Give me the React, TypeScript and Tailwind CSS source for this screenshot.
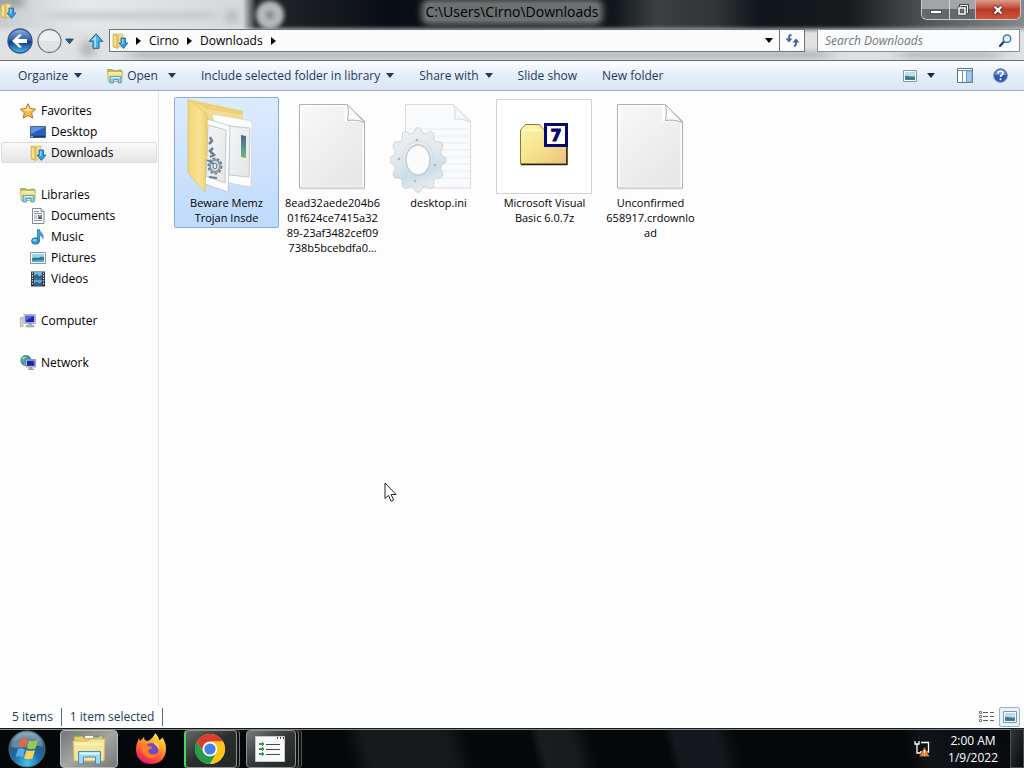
import React from "react";

type IconProps = { className?: string };

const ChevronDown = ({ className = "" }: IconProps) => (
  <svg className={`shrink-0 ${className}`} width="8" height="5" viewBox="0 0 8 5" aria-hidden="true">
    <path d="M0 0h8L4 5z" fill="currentColor" />
  </svg>
);

const ChevronRight = ({ className = "" }: IconProps) => (
  <svg className={`shrink-0 ${className}`} width="5" height="8" viewBox="0 0 5 8" aria-hidden="true">
    <path d="M0 0v8l5-4z" fill="#000" />
  </svg>
);

const DownloadsIcon = ({ className = "" }: IconProps) => (
  <svg className={`shrink-0 ${className}`} width="16" height="16" viewBox="0 0 16 16" aria-hidden="true">
    <path d="M2 1h9v13H2z" fill="#f0dc94" stroke="#cdb468" strokeWidth=".6" />
    <path d="M1 1l5 1.500v13L1 14z" fill="#e8c65c" stroke="#c1a24c" strokeWidth=".5" />
    <path d="M2 2.500l2 .6v10.500l-2-.8z" fill="#f3e09a" />
    <path d="M9 5h4.500v5H16l-4.500 5.500L7 10h2z" fill="#2f9ae0" stroke="#1668a8" strokeWidth=".8" />
    <path d="M10 6h1.500v5H9l1-.6z" fill="#8bd3f8" />
  </svg>
);

const LibrariesIcon = ({ className = "" }: IconProps) => (
  <svg className={`shrink-0 ${className}`} width="16" height="16" viewBox="0 0 16 16" aria-hidden="true">
    <path d="M.5 3.500V1.500h5l1 1h4l.5-.5h3.500v2" fill="#9dc95a" stroke="#8aa04a" strokeWidth=".7" />
    <path d="M.5 3.500h15l-.7 10H1.200z" fill="#f3e087" stroke="#c9ab4e" strokeWidth=".8" />
    <path d="M2 5h12" stroke="#fff8c8" />
    <path d="M3 15V8.500h11V15h-3v-3.500H6.500V15z" fill="#8ed3ee" stroke="#3d91bd" strokeWidth=".8" />
    <path d="M4 9.500h9" stroke="#d8f4ff" />
  </svg>
);

const StarIcon = () => (
  <svg className="shrink-0" width="16" height="16" viewBox="0 0 16 16" aria-hidden="true">
    <path d="M8 .7l2.300 4.800 5.200.6-3.800 3.700 1 5.300L8 12.500l-4.700 2.600 1-5.300L.5 6.100l5.200-.6z" fill="#fbb93c" stroke="#a9743a" strokeWidth="1" strokeLinejoin="round" />
    <path d="M8 2.500l1.600 3.600 4 .5L8 8.500 2.500 6.600l4-.5z" fill="#ffe59a" />
  </svg>
);

const DesktopIcon = () => (
  <svg className="shrink-0" width="16" height="16" viewBox="0 0 16 16" aria-hidden="true">
    <path d="M.5 2.500h15v11H.5z" fill="#2a5fbf" stroke="#4a6690" />
    <path d="M1 3h14L1 10z" fill="#5c93e6" />
    <path d="M1 12.500h14" stroke="#173a7a" strokeWidth="1.500" />
    <path d="M1 12.500h2" stroke="#8fd0f5" strokeWidth="1" />
  </svg>
);

const DocumentIcon = () => (
  <svg className="shrink-0" width="16" height="16" viewBox="0 0 16 16" aria-hidden="true">
    <path d="M2.500.5h8.500l3 3v12H2.500z" fill="#fff" stroke="#7f8790" />
    <path d="M11 .5v3h3" fill="#dde3e8" stroke="#7f8790" />
    <path d="M4 3.500h5M4 5.500h8M4 8h3M4 10h3M4 12.500h8" stroke="#8796a5" />
    <path d="M8 7h4v4H8z" fill="#4f6270" />
    <path d="M8.500 8.500l1.500-1 1.500 1" stroke="#c8d5dd" fill="none" />
  </svg>
);

const MusicIcon = () => (
  <svg className="shrink-0" width="16" height="16" viewBox="0 0 16 16" aria-hidden="true">
    <ellipse cx="5.500" cy="12" rx="4" ry="3.300" fill="#2f96d2" stroke="#1b6fa5" strokeWidth=".7" />
    <path d="M7.500.5h2c.2 3 4.500 3.800 3.500 9-.6-2-1.500-3-3.500-3.300V12h-2z" fill="#3aa2dc" stroke="#1b6fa5" strokeWidth=".7" />
    <ellipse cx="4.800" cy="11.200" rx="2" ry="1.300" fill="#8ed4f4" />
  </svg>
);

const PicturesIcon = () => (
  <svg className="shrink-0" width="16" height="16" viewBox="0 0 16 16" aria-hidden="true">
    <path d="M.5 2.500h15v11H.5z" fill="#fff" stroke="#7d98b3" />
    <path d="M2 4h12v8H2z" fill="#9bd5f0" />
    <path d="M2 8.500c3-2 5 0 7-1s3-1 5-.5V12H2z" fill="#2c7d86" />
    <path d="M2 10.500c4-1.500 8 .5 12-1V12H2z" fill="#5aa6c8" />
  </svg>
);

const VideosIcon = () => (
  <svg className="shrink-0" width="16" height="16" viewBox="0 0 16 16" aria-hidden="true">
    <path d="M1 .5h14v15H1z" fill="#2d3336" />
    <path d="M4 1h8v6.500H4z" fill="#6fb6dd" />
    <path d="M4 8.500h8V15H4z" fill="#5fa5d2" />
    <path d="M4 5l3-2 2 2.500 3-1.500v3.500H4zM4 12.500l3-2 2 2 3-1.500v4H4z" fill="#2c6292" />
    <path d="M2.500 1.500v13M13.500 1.500v13" stroke="#e8ecee" strokeWidth="1.200" strokeDasharray="1.300 1.300" />
  </svg>
);

const ComputerIcon = () => (
  <svg className="shrink-0" width="16" height="16" viewBox="0 0 16 16" aria-hidden="true">
    <path d="M.5 4.500h2.500v9H.5z" fill="#dcdfd6" stroke="#a0a49d" strokeWidth=".8" />
    <path d="M4 1.500h11.500v9H4z" fill="#d5dbe3" stroke="#9aa4ae" strokeWidth=".8" />
    <path d="M5.500 2.800h8.700v6.500H5.500z" fill="#1d27b4" />
    <path d="M5.500 2.800h8.700L9 6 5.500 8z" fill="#5665df" />
    <path d="M8.500 10.500h3v2h2.500v1.500H6v-1.500h2.500z" fill="#b3b8ba" stroke="#858a8d" strokeWidth=".5" />
  </svg>
);

const NetworkIcon = () => (
  <svg className="shrink-0" width="16" height="16" viewBox="0 0 16 16" aria-hidden="true">
    <circle cx="6" cy="5.500" r="5.200" fill="#3d92cc" stroke="#2c678f" strokeWidth=".6" />
    <path d="M2 3c2-2.500 5-2 5.500-1.500C7 3 5 3 4.500 5S3 7 1 6zM4 8c2 0 3 1 2.500 2.500-1 .5-2.500 0-3.500-1z" fill="#66b569" />
    <path d="M2 3l3-1-1 2z" fill="#d5f2d4" />
    <path d="M6 4.500h9.500v7.500H6z" fill="#d8dde5" stroke="#7d8793" strokeWidth=".8" />
    <path d="M7 5.600h7.500v5.300H7z" fill="#1b24ad" />
    <path d="M12 5.600h2.500v3z" fill="#5e6bea" />
    <path d="M9.500 12h2.500v1.500h2V15H8v-1.500h1.500z" fill="#9ba2a8" />
  </svg>
);

const FolderArt = () => (
  <svg width="96" height="96" viewBox="0 0 96 96" aria-hidden="true">
    <defs>
      <linearGradient id="flap" x1="0" y1="0" x2="1" y2="0">
        <stop offset="0" stopColor="#f1d576" />
        <stop offset=".6" stopColor="#f9e494" />
        <stop offset="1" stopColor="#ecd06f" />
      </linearGradient>
      <linearGradient id="sheet" x1="0" y1="0" x2="1" y2="1">
        <stop offset="0" stopColor="#f4f5f6" />
        <stop offset="1" stopColor="#e3e5e7" />
      </linearGradient>
      <linearGradient id="strip" x1="0" y1="0" x2="0" y2="1">
        <stop offset="0" stopColor="#45698a" />
        <stop offset="1" stopColor="#74b680" />
      </linearGradient>
    </defs>
    <g transform="translate(1 0)">
      <path d="M9 0l55 12v28H28z" fill="#f3dd8b" />
      <path d="M11 1l53 11v4L28 10z" fill="#ecd176" />
      <path d="M33 15l40 7-1 66-22-4z" fill="#fdfdfe" stroke="#c5ccd3" strokeWidth=".6" />
      <path d="M50 27l21 2-1 49-20-2z" fill="url(#sheet)" stroke="#c5cacd" />
      <path d="M62 36l5 1v22l-5-1z" fill="url(#strip)" />
      <path d="M28 20l23 7-2 66-23-8z" fill="#fdfdfe" stroke="#b4bac0" strokeWidth=".7" />
      <path d="M29 26l18 5-1 53-19-7z" fill="url(#sheet)" stroke="#c4c9cc" />
      <g fill="none" stroke="#6d8092">
        <ellipse cx="36" cy="67" rx="6" ry="7" strokeWidth="3" strokeDasharray="2.500 1.500" />
        <ellipse cx="36" cy="67" rx="5" ry="6" strokeWidth="2" stroke="#8798a8" />
        <ellipse cx="36" cy="67" rx="2" ry="3" strokeWidth="1" stroke="#55687c" />
        <path d="M31 38l2 4-3 3M34 49l-3 3 4 4-4 2" strokeWidth="2.500" />
        <path d="M28 61l7 4M30 78l8 1" strokeWidth="2" />
      </g>
      <path d="M9 0l19 15v43c-2 2-1 4-1 6l-1 29L9 74z" fill="url(#flap)" stroke="#dec065" strokeWidth=".7" />
    </g>
  </svg>
);

const PageArt = () => (
  <svg width="96" height="96" viewBox="0 0 96 96" aria-hidden="true">
    <defs>
      <linearGradient id="page" x1="0" y1="0" x2=".7" y2="1">
        <stop offset="0" stopColor="#f8f8f8" />
        <stop offset="1" stopColor="#e7e7e7" />
      </linearGradient>
    </defs>
    <path d="M15.500 5.500h47L80.500 22v67h-65z" fill="#fff" stroke="#adadad" />
    <path d="M17.500 7.500h43v15h18v65h-61z" fill="url(#page)" />
    <path d="M63.500 5.500c1 5 1 10 0 16 6-1 12 0 17 2z" fill="#fafafa" stroke="#adadad" />
    <path d="M16 90h65" stroke="#d8d8d8" />
  </svg>
);

const gearPoints = Array.from({ length: 48 }, (_, i) => {
  const phase = i % 4;
  const r = phase === 0 || phase === 3 ? 1 : 1.17;
  const a = ((i - 1.5) / 48) * Math.PI * 2;
  return `${(28 + Math.cos(a) * 24 * r).toFixed(1)},${(61 + Math.sin(a) * 27.500 * r).toFixed(1)}`;
}).join(" ");

const IniArt = () => (
  <svg width="96" height="96" viewBox="0 0 96 96" aria-hidden="true">
    <defs>
      <linearGradient id="gear" x1="0" y1="0" x2=".3" y2="1">
        <stop offset="0" stopColor="#f0f1f2" />
        <stop offset=".5" stopColor="#e2e9ee" />
        <stop offset=".8" stopColor="#cadeea" />
        <stop offset="1" stopColor="#e4eaee" />
      </linearGradient>
      <mask id="gear-hole">
        <rect width="96" height="96" fill="#fff" />
        <ellipse cx="28" cy="61" rx="12" ry="15" fill="#000" />
      </mask>
    </defs>
    <path d="M15.500 5.500h48L80.500 22v67h-65z" fill="#f9fafb" stroke="#dadcdf" />
    <path d="M17 30h62M17 37h62M17 44h62M17 51h62M17 58h62M17 65h62M17 72h62M17 79h62" stroke="#e8edf2" />
    <path d="M63.500 5.500c2 5 2 10 1 15 6-1 11 0 16 3z" fill="#f5f6f7" stroke="#dadcdf" />
    <ellipse cx="28" cy="61" rx="13" ry="16" fill="#fafbfc" />
    <g mask="url(#gear-hole)">
      <polygon points={gearPoints} fill="url(#gear)" stroke="#cbd4da" strokeLinejoin="round" />
    </g>
    <ellipse cx="28" cy="61" rx="16" ry="19" fill="none" stroke="#d5dde3" />
    <ellipse cx="28" cy="61" rx="12" ry="15" fill="none" stroke="#bfcad4" strokeWidth="1.500" />
    <g fill="#a9b8c6">
      <circle cx="27" cy="41" r="1.300" /><circle cx="9" cy="60" r="1.300" />
      <circle cx="45" cy="66" r="1.300" /><circle cx="25" cy="82" r="1.300" />
    </g>
  </svg>
);

const ArchiveArt = () => (
  <svg width="96" height="96" viewBox="0 0 96 96" aria-hidden="true">
    <defs>
      <linearGradient id="zip" x1="0" y1="0" x2="1" y2="1">
        <stop offset="0" stopColor="#fff6ae" />
        <stop offset=".6" stopColor="#f3de88" />
        <stop offset="1" stopColor="#eabf80" />
      </linearGradient>
    </defs>
    <path d="M.5.5h95v94H.5z" fill="#fff" stroke="#d2d2d2" />
    <path d="M24.500 65V31l5-5.500h14l4 5h23V65z" fill="url(#zip)" stroke="#8d7a2e" />
    <path d="M26 31h20" stroke="#fff8bd" strokeWidth="2" />
    <path d="M25 65.500h46V47" stroke="#29230b" fill="none" strokeWidth="1.500" />
    <path d="M49.500 25.500h21v21h-21z" fill="#fff" stroke="#080870" strokeWidth="3" />
    <text x="60" y="42" textAnchor="middle" fill="#080870" stroke="#080870" strokeWidth="1" className="font-['DejaVu_Sans',sans-serif] text-[16px] font-bold">7</text>
  </svg>
);

const ViewThumbIcon = () => (
  <svg width="14" height="12" viewBox="0 0 14 12" aria-hidden="true">
    <path d="M.5.500h13v11H.5z" fill="#fff" stroke="#7e98b0" />
    <path d="M2 2h10v8H2z" fill="#bcdcea" />
    <path d="M2 6c3-1 4 1 10 .5V10H2z" fill="#3d7c8c" />
  </svg>
);

const StartOrb = () => (
  <svg width="38" height="38" viewBox="0 0 38 38" aria-hidden="true">
    <defs>
      <radialGradient id="orb" cx=".5" cy=".9" r=".9">
        <stop offset="0" stopColor="#41c9f3" />
        <stop offset=".4" stopColor="#1c6fa9" />
        <stop offset=".75" stopColor="#2c5373" />
        <stop offset="1" stopColor="#8ea9b9" />
      </radialGradient>
    </defs>
    <circle cx="19" cy="19" r="18" fill="url(#orb)" stroke="#4d7186" />
    <path d="M3 17C4 8 11 3 19 3s15 5 16 14c-9-4-22 3-32 0z" fill="#bed3df" opacity=".4" />
    <path d="M13.500 9c2.500-1 4-.5 6 .7l-2 8c-2-1.300-4.500-1.500-7-.5z" fill="#ed6533" />
    <path d="M21 10.500c2.500 1.300 5 1 9-.5l-2.500 8.500c-2.500 1-6 1-8.500-.3z" fill="#9bc94b" />
    <path d="M10 18.700c2.500-1 5-.5 7 .7l-2.300 8c-2-1.300-4.500-1.500-7-.5z" fill="#5caae9" />
    <path d="M18.500 20c2.500 1.300 5.500 1 8.500 0l-2.500 8.500c-2.500 1-6 1-8.500-.3z" fill="#fad24e" />
  </svg>
);

const ExplorerIcon = () => (
  <svg width="34" height="32" viewBox="0 0 34 32" aria-hidden="true">
    <path d="M2 8V3h9l1 2h10V3h9v6" fill="#e6cc73" stroke="#ad903f" />
    <path d="M3 2.500h5" stroke="#55ad54" strokeWidth="2" />
    <path d="M13 4h8" stroke="#f9f9f0" strokeWidth="2" />
    <path d="M23 3.500h4" stroke="#4099d1" strokeWidth="2" />
    <path d="M1 8h15l2-2h15l-1 22H2z" fill="#f6e59c" stroke="#d4b75e" />
    <path d="M3 11h28" stroke="#fffbd7" />
    <path d="M6.500 31V18.500h22V31h-5v-7h-12v7z" fill="#9bd8f5" stroke="#438fc0" />
    <path d="M8 20.500h19" stroke="#e1f7ff" strokeWidth="2" />
  </svg>
);

const FirefoxIcon = () => (
  <svg width="32" height="32" viewBox="0 0 32 32" aria-hidden="true">
    <defs>
      <linearGradient id="fox" x1=".8" y1="0" x2=".3" y2="1">
        <stop offset="0" stopColor="#fff044" />
        <stop offset=".35" stopColor="#ffa52b" />
        <stop offset=".7" stopColor="#ff5136" />
        <stop offset="1" stopColor="#e3166c" />
      </linearGradient>
    </defs>
    <path d="M20 0c3 3 4 5 4 7 3-1 3-2 3-3 3 4 4 8 4 12 0 9-6 15-15 15S1 25 1 16C1 11 3 8 4 5l1 3 4-4c0 3 2 4 4 4 3-2 6-4 7-8z" fill="url(#fox)" />
    <path d="M10 13c4-4 10-4 13 1 2 5-2 10-7 9-4 0-7-3-7-7 3 2 5 1 7-1-2-1-4-1-6-2z" fill="#7449c5" />
    <path d="M4 14c3-4 7-3 9-1l4 1c0 2-3 2-4 4 1 4 7 5 11 1-2 7-11 8-15 3-2-3-2-6-5-8z" fill="#ff7c28" />
    <path d="M19 8c4 1 6 5 5 9-1-2-3-5-5-6z" fill="#ffd33c" />
  </svg>
);

const ChromeIcon = () => (
  <svg width="32" height="32" viewBox="0 0 32 32" aria-hidden="true">
    <circle cx="16" cy="16" r="15" fill="#fbc51a" />
    <path d="M3 8.500A15 15 0 0 1 29 8.500H16A7.500 7.500 0 0 0 9.500 19.800z" fill="#dc3c30" />
    <path d="M3 8.500l6.500 11.300A7.500 7.500 0 0 0 22.500 19.800L16 31A15 15 0 0 1 3 8.500z" fill="#229c51" />
    <path d="M16 31l6.500-11.200A7.500 7.500 0 0 0 22.500 12L29 8.500A15 15 0 0 1 16 31z" fill="#fbc51a" />
    <path d="M16 8.500h13l1 4h-9z" fill="#fbc51a" />
    <circle cx="16" cy="16" r="7.300" fill="#f6f8fa" />
    <circle cx="16" cy="16" r="5.600" fill="#3f83e8" />
  </svg>
);

const ListAppIcon = () => (
  <svg width="30" height="26" viewBox="0 0 30 26" aria-hidden="true">
    <path d="M.5.5h29v25H.5z" fill="#f9f9f9" stroke="#c7c7c7" />
    <path d="M22 2h1M25 2h1M28 2h1" stroke="#444" strokeWidth="2" />
    <g stroke="#379b45" strokeWidth="2" fill="none">
      <path d="M4 8h4M4 13h4M4 18h4" /><path d="M7 6l2 2-2 2M7 11l2 2-2 2M7 16l2 2-2 2" strokeWidth="1" />
    </g>
    <path d="M11 8.500h14M11 13.500h14M11 18.500h14" stroke="#424b48" />
  </svg>
);

const NavRow = ({ label, icon, child = false, selected = false }: { label: string; icon: React.ReactNode; child?: boolean; selected?: boolean }) => (
  <a
    href="#"
    className={`mx-px flex h-[21px] items-center gap-1 rounded-xs border ${child ? "pl-7" : "pl-[18px]"} ${
      selected ? "border-[#dcdcdc] bg-linear-to-b from-[#fafafa] to-[#e5e5e5]" : "border-transparent"
    }`}
  >
    {icon}
    <span className="pl-px">{label}</span>
  </a>
);

const FileItem = ({ lines, art, selected = false }: { lines: string[]; art: React.ReactNode; selected?: boolean }) => (
  <button
    type="button"
    className={`flex w-[105px] flex-col items-center rounded-xs border px-0 pt-px pb-px text-center text-[11px] leading-[15px] ${
      selected ? "border-[#84acdd] bg-linear-to-b from-[#dcebfd] to-[#bfdafb]" : "border-transparent"
    }`}
  >
    <span className="block pr-px">{art}</span>
    <span className="pb-px">
      {lines.map((line) => (
        <span key={line} className="block whitespace-nowrap">{line}</span>
      ))}
    </span>
  </button>
);

const commandClass = "flex h-full items-center gap-[6px] whitespace-nowrap";

export default function App() {
  return (
    <div className="relative flex min-h-screen flex-col overflow-hidden bg-[#fdfdfd] font-['Open_Sans','Noto_Sans',sans-serif] text-[12px] text-black">
      <header className="relative isolate">
        <svg className="absolute inset-0 -z-10 h-full w-full" viewBox="0 0 1024 60" preserveAspectRatio="none" aria-hidden="true">
          <defs>
            <filter id="soft" x="-50%" y="-50%" width="200%" height="200%"><feGaussianBlur stdDeviation="4" /></filter>
            <filter id="edge" x="-50%" y="-50%" width="200%" height="200%"><feGaussianBlur stdDeviation="2" /></filter>
            <filter id="softer"><feGaussianBlur stdDeviation="10 3" /></filter>
            <linearGradient id="glass" x1="0" y1="0" x2="1" y2="0">
              <stop offset="0" stopColor="#c9cccf" />
              <stop offset=".08" stopColor="#e7e8ea" />
              <stop offset=".237" stopColor="#d5d8da" />
              <stop offset=".25" stopColor="#24282c" />
              <stop offset=".38" stopColor="#090e14" />
              <stop offset=".6" stopColor="#11171b" />
              <stop offset=".64" stopColor="#3b3f40" />
              <stop offset=".7" stopColor="#303436" />
              <stop offset=".74" stopColor="#10161b" />
              <stop offset=".83" stopColor="#171b1e" />
              <stop offset=".91" stopColor="#55585a" />
              <stop offset="1" stopColor="#85888a" />
            </linearGradient>
          </defs>
          <rect width="1024" height="60" fill="url(#glass)" />
          <path d="M-20 29h1080v50H-20z" fill="#dfe1e3" filter="url(#edge)" />
          <g filter="url(#softer)">
            <path d="M130 52h700v6H130z" fill="#a9abad" />
            <path d="M900 53h100v4H900z" fill="#989a9c" />
            <path d="M50 13h165v5H50z" fill="#bcbfc2" />
          </g>
          <g filter="url(#soft)">
            <path d="M-10-5h34v12H-10z" fill="#999da0" />
            <circle cx="29" cy="14" r="5" fill="#d0d7cc" />
            <circle cx="232" cy="17" r="5" fill="#a4a7aa" />
            <circle cx="88" cy="49" r="8" fill="#b1b4b7" />
          </g>
          <circle cx="270" cy="15" r="14" fill="#d0d3d5" opacity=".85" filter="url(#edge)" />
          <circle cx="270" cy="15" r="4" fill="#858a8e" filter="url(#edge)" />
        </svg>

        <div className="grid h-[29px] grid-cols-[1fr_auto_1fr] items-start">
          <div className="pt-[3px]"><DownloadsIcon /></div>
          <h1 className="px-2 pt-[3px] text-[14px] leading-[18px] font-normal">
            <span className="block rounded-sm bg-[#6d7072] shadow-[0_0_6px_4px_#6d7072]">C:\Users\Cirno\Downloads</span>
          </h1>
          <div className="mr-[3px] flex h-5 justify-self-end overflow-hidden rounded-b-md border border-t-0 border-[#c8cbcd]">
            <button type="button" aria-label="Minimize" className="flex w-[27px] items-end justify-center bg-linear-to-b from-[#a2a4a5] from-45% to-[#64686a] to-50% pb-[5px]">
              <span className="h-1 w-3 border border-[#51595e] bg-white" />
            </button>
            <button type="button" aria-label="Restore" className="flex w-[26px] items-center justify-center border-l border-[#d1d4d5] bg-linear-to-b from-[#a2a4a5] from-45% to-[#64686a] to-50%">
              <svg width="12" height="12" viewBox="0 0 12 12" aria-hidden="true">
                <path d="M3.500 1.500h7v7h-7z" fill="none" stroke="#40484e" strokeWidth="3" /><path d="M3.500 1.500h7v7h-7z" fill="none" stroke="#fff" />
                <path d="M2 4h6v6H2z" fill="#747779" stroke="#40484e" strokeWidth="3" /><path d="M2 4h6v6H2z" fill="none" stroke="#fff" strokeWidth="1.500" />
              </svg>
            </button>
            <button type="button" aria-label="Close" className="flex w-[45px] items-center justify-center border-l border-[#d1b7b0] bg-linear-to-b from-[#db9b8d] via-[#b83b24] to-[#cf5439]">
              <svg width="12" height="10" viewBox="0 0 12 10" aria-hidden="true">
                <path d="M2 1l8 8M10 1L2 9" stroke="#642d2b" strokeWidth="4" />
                <path d="M2.500 1.500l7 7M9.500 1.500l-7 7" stroke="#fff" strokeWidth="2.300" />
              </svg>
            </button>
          </div>
        </div>

        <div className="flex h-[31px] items-start pr-1 pl-[7px]">
          <div className="flex h-6 items-center">
            <button type="button" aria-label="Back" className="flex">
              <svg width="26" height="26" viewBox="0 0 26 26" aria-hidden="true">
                <defs>
                  <linearGradient id="back" x1="0" y1="0" x2="0" y2="1">
                    <stop offset="0" stopColor="#8fb0dc" /><stop offset=".48" stopColor="#295cae" />
                    <stop offset=".5" stopColor="#102f7f" /><stop offset="1" stopColor="#42c2ef" />
                  </linearGradient>
                </defs>
                <circle cx="13" cy="13" r="12" fill="url(#back)" stroke="#30548a" strokeWidth="1.300" />
                <path d="M5 13l7-6.500h3L11 11h9v4h-9l4 4.500h-3z" fill="#fff" />
              </svg>
            </button>
            <button type="button" aria-label="Forward" className="ml-1 flex">
              <svg width="25" height="26" viewBox="0 0 25 26" aria-hidden="true">
                <circle cx="12.500" cy="13" r="11.500" fill="#dfe1e3" stroke="#767a7e" strokeWidth="1.300" />
                <path d="M2 13A10.500 10.500 0 0 1 23 13z" fill="#eeeff1" />
              </svg>
            </button>
            <button type="button" aria-label="Recent locations" className="ml-[3px] flex">
              <svg width="9" height="7" viewBox="0 0 10 7" aria-hidden="true"><path d="M.8.8h8.400L5 6z" fill="#286587" stroke="#1d4056" /></svg>
            </button>
            <button type="button" aria-label="Up one level" className="ml-[14px] flex">
              <svg width="16" height="16" viewBox="0 0 16 16" aria-hidden="true">
                <path d="M8 .8l6.800 7.500H11v7H5v-7H1.200z" fill="#4eb4ec" stroke="#1e6291" strokeLinejoin="round" />
                <path d="M8 2.500v12H6.300V7H4z" fill="#a6def9" />
              </svg>
            </button>
          </div>
          <nav aria-label="Address" className="ml-[5px] flex h-[23px] min-w-0 flex-1 items-center border border-[#707477] bg-[#fbfbfc] pl-[2px]">
            <DownloadsIcon />
            <ChevronRight className="ml-2" />
            <a href="#" className="ml-2">Cirno</a>
            <ChevronRight className="ml-2" />
            <a href="#" className="ml-2">Downloads</a>
            <ChevronRight className="ml-2" />
            <button type="button" aria-label="Previous locations" className="ml-auto flex px-1.5"><ChevronDown /></button>
            <button type="button" aria-label="Refresh" className="flex h-full w-[25px] items-center justify-center border-l border-[#707477]">
              <svg width="15" height="13" viewBox="0 0 15 13" aria-hidden="true">
                <path d="M6.500 1Q4 1 4 3.500V5M11 8v1.500q0 2.500-2 2.500" stroke="#3d61a9" strokeWidth="1.800" fill="none" />
                <path d="M.5 4.500h7L4 8.500zM7.500 8.500l3.500-4 3.500 4z" fill="#3d61a9" />
              </svg>
            </button>
          </nav>
          <div className="ml-3 flex h-[23px] w-[203px] items-center border border-[#8c9092] bg-[#fafbfc] px-[7px]">
            <input type="text" aria-label="Search Downloads" placeholder="Search Downloads" className="h-full min-w-0 flex-1 bg-transparent leading-[20px] outline-none placeholder:text-[#73777a] placeholder:italic" />
            <svg width="13" height="13" viewBox="0 0 13 13" aria-hidden="true">
              <path d="M1 12l4-4.500" stroke="#27417d" strokeWidth="2.300" strokeLinecap="round" />
              <circle cx="8" cy="4.700" r="3.700" fill="#ecf6ff" stroke="#497caf" strokeWidth="1.600" />
            </svg>
          </div>
        </div>
      </header>

      <div role="toolbar" aria-label="Folder commands" className="flex h-[31px] shrink-0 items-center gap-[25px] border-t border-b border-t-[#696f77] border-b-[#a0a9c1] bg-linear-to-b from-[#f8fbff] from-10% via-[#e4eefa] via-50% to-[#dce6f5] pr-4 pl-[18px] text-[#1e395b]">
        <button type="button" className={commandClass}>Organize<ChevronDown className="text-[#243a50]" /></button>
        <button type="button" className={commandClass}>
          <span className="flex items-center gap-1"><LibrariesIcon />Open</span>
          <ChevronDown className="ml-1 text-[#243a50]" />
        </button>
        <button type="button" className={commandClass}>Include selected folder in library<ChevronDown className="text-[#243a50]" /></button>
        <button type="button" className={commandClass}>Share with<ChevronDown className="text-[#243a50]" /></button>
        <button type="button" className={commandClass}>Slide show</button>
        <button type="button" className={commandClass}>New folder</button>
        <div className="ml-auto flex items-center">
          <button type="button" aria-label="Change view" className="flex"><ViewThumbIcon /></button>
          <button type="button" aria-label="More view options" className="ml-2.5 flex"><ChevronDown className="text-[#162b42]" /></button>
          <button type="button" aria-label="Show preview pane" className="ml-[22px] flex">
            <svg width="16" height="15" viewBox="0 0 16 15" aria-hidden="true">
              <path d="M.5.5h15v14H.5z" fill="#fff" stroke="#54718f" /><path d="M1 2.500h14M5.500 3v11" stroke="#718ca6" />
              <path d="M9.500 3H15v11H9.500z" fill="#9ccbf0" stroke="#6f9fca" />
            </svg>
          </button>
          <button type="button" aria-label="Help" className="ml-5 flex">
            <svg width="15" height="15" viewBox="0 0 15 15" aria-hidden="true">
              <circle cx="7.500" cy="7.500" r="6.800" fill="#2d59bb" stroke="#7184ab" />
              <path d="M2 7a5.500 5.500 0 0 1 11 0z" fill="#6f96dd" />
              <path d="M5 5.500q0-2.200 2.500-2.200T10 5.300q0 1.200-1.300 1.700T7.500 9" fill="none" stroke="#fff" strokeWidth="1.600" /><circle cx="7.500" cy="11.200" r="1" fill="#fff" />
            </svg>
          </button>
        </div>
      </div>

      <div className="flex min-h-0 flex-1">
        <nav aria-label="Folders" className="flex w-[159px] shrink-0 flex-col gap-[21px] border-r border-[#dfe3ec] pt-[9px]">
          <div>
            <NavRow label="Favorites" icon={<StarIcon />} />
            <NavRow label="Desktop" icon={<DesktopIcon />} child />
            <NavRow label="Downloads" icon={<DownloadsIcon />} child selected />
          </div>
          <div>
            <NavRow label="Libraries" icon={<LibrariesIcon />} />
            <NavRow label="Documents" icon={<DocumentIcon />} child />
            <NavRow label="Music" icon={<MusicIcon />} child />
            <NavRow label="Pictures" icon={<PicturesIcon />} child />
            <NavRow label="Videos" icon={<VideosIcon />} child />
          </div>
          <NavRow label="Computer" icon={<ComputerIcon />} />
          <NavRow label="Network" icon={<NetworkIcon />} />
        </nav>
        <main className="flex flex-1 flex-wrap content-start items-start gap-px pt-1.5 pl-[15px]">
          <FileItem selected art={<FolderArt />} lines={["Beware Memz", "Trojan Insde"]} />
          <FileItem art={<PageArt />} lines={["8ead32aede204b6", "01f624ce7415a32", "89-23af3482cef09", "738b5bcebdfa0..."]} />
          <FileItem art={<IniArt />} lines={["desktop.ini"]} />
          <FileItem art={<ArchiveArt />} lines={["Microsoft Visual", "Basic 6.0.7z"]} />
          <FileItem art={<PageArt />} lines={["Unconfirmed", "658917.crdownlo", "ad"]} />
        </main>
      </div>

      <footer className="flex h-[22px] shrink-0 items-center pr-1 pl-3 text-[#1e395b]">
        <span className="border-r border-[#5c6c7c] pr-2">5 items</span>
        <span className="border-r border-[#5c6c7c] px-2">1 item selected</span>
        <div className="ml-auto flex items-center gap-1">
          <button type="button" aria-label="Details view" className="flex">
            <svg width="16" height="12" viewBox="0 0 16 12" aria-hidden="true">
              <path d="M.5.500h2v2h-2zM.5 4.500h2v2h-2zM.5 8.500h2v2h-2z" fill="#fff" stroke="#777" /><path d="M4 1.500h5M11 1.500h4M4 5.500h5M11 5.500h4M4 9.500h5M11 9.500h4" stroke="#616161" />
            </svg>
          </button>
          <button type="button" aria-label="Large thumbnails" className="flex h-5 w-[21px] items-center justify-center rounded-xs border border-[#92b4ce] bg-[#e7f2fb]"><ViewThumbIcon /></button>
        </div>
      </footer>

      <div className="flex h-10 shrink-0 items-stretch border-t border-[#161919] bg-[linear-gradient(75deg,#05080b_0%,#05080b_34%,#171a1d_36%,#15191c_44%,#05090c_46%,#05090c_52%,#191d20_53%,#171b1e_56%,#04080a_58%,#04080a_65%,#15181c_66%,#15181c_70%,#04080a_72%,#04080a_88%,#101318_90%,#05080b_100%)] pl-2 text-white shadow-[inset_0_1px_0_#858989]">
        <button type="button" aria-label="Start" className="flex items-center"><StartOrb /></button>
        <button type="button" aria-label="File Explorer" className="mt-px ml-3.5 flex w-[58px] items-center justify-center rounded-sm border border-[#b8bab9] bg-linear-to-br from-[#737777] via-[#a3a5a2] to-[#777a7a]"><ExplorerIcon /></button>
        <button type="button" aria-label="Firefox" className="ml-[6px] flex w-[54px] items-center justify-center"><FirefoxIcon /></button>
        <button type="button" aria-label="Chrome" className="mt-px ml-1.5 flex w-[53px] items-center justify-center rounded-sm border border-l-2 border-[#8d9190] border-l-[#34e158] bg-linear-to-br from-[#656a69] via-[#292d2d] to-[#232728] pr-0.5 shadow-[2px_0_0_#111,3px_0_0_#777]"><ChromeIcon /></button>
        <button type="button" aria-label="Task list" className="mt-px ml-[9px] flex w-[50px] items-center justify-center rounded-sm border border-[#8d9190] bg-linear-to-br from-[#777b7b] via-[#333738] to-[#202425] pr-0.5 shadow-[2px_0_0_#111,3px_0_0_#777,5px_0_0_#111,6px_0_0_#555]"><ListAppIcon /></button>
        <div className="ml-auto flex items-center">
          <button type="button" aria-label="Network status: warning" className="flex">
            <svg width="16" height="17" viewBox="0 0 16 17" aria-hidden="true">
              <path d="M1 1v3h4V1M3 4v9h4M7 2.500h7.500V12H6" fill="none" stroke="#fff" strokeWidth="1.300" />
              <path d="M10.500 7l5 9.500h-10z" fill="#e6832f" stroke="#6c3917" strokeWidth=".6" /><path d="M10.500 10v3M10.500 14.500v1" stroke="#fff" strokeWidth="1.200" />
            </svg>
          </button>
          <time dateTime="2022-01-09T02:00" className="ml-[18px] text-center leading-[17px]">
            <span className="block">2:00 AM</span>
            <span className="block">1/9/2022</span>
          </time>
          <button type="button" aria-label="Show desktop" className="ml-3 h-full w-[14px] border border-[#4a4f50] bg-linear-to-br from-[#333738] to-[#080b0d]" />
        </div>
      </div>

      <svg className="pointer-events-none absolute top-[482px] left-[384px]" width="14" height="21" viewBox="0 0 14 21" aria-hidden="true">
        <path d="M1 1v15.500l3.500-3.200 2.600 6 2.600-1.200-2.600-5.600h5z" fill="#fff" stroke="#222" strokeLinejoin="round" />
      </svg>
    </div>
  );
}
